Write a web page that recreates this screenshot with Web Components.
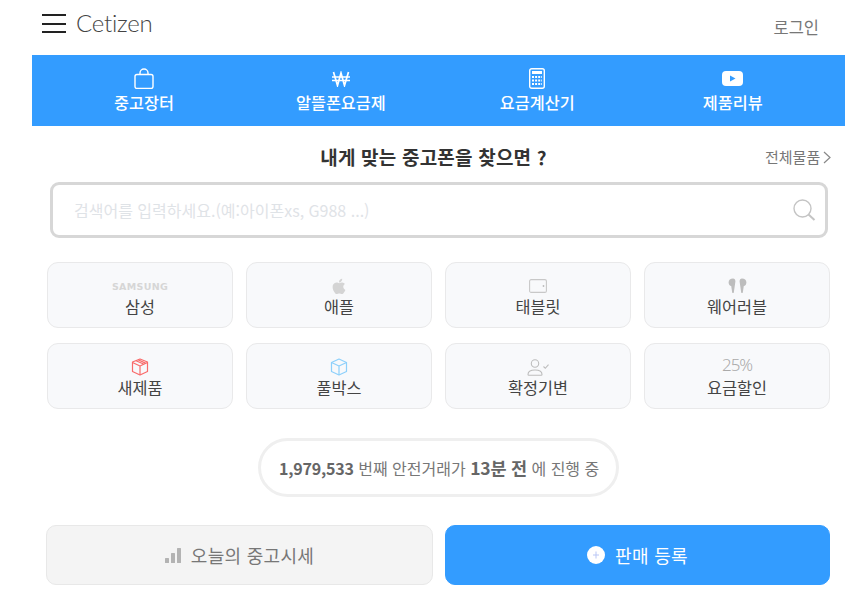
<!DOCTYPE html>
<html lang="ko">
<head>
<meta charset="utf-8">
<title>Cetizen</title>
<style>
  html, body { margin: 0; background: #fff; }
  body { font-family: "Noto Sans CJK KR", "Noto Sans", sans-serif; color: #444; }
  svg { display: block; }
</style>
</head>
<body>

<ce-page>
  <ce-header></ce-header>

  <ce-nav>
    <ce-nav-item label="중고장터">
      <svg width="20" height="21" viewBox="0 0 20 21" fill="none" stroke="#fff" stroke-width="1.4"><rect x="1" y="6.5" width="18" height="14" rx="2"/><path d="M6 6.5V5a4 4 0 0 1 8 0v1.5"/></svg>
    </ce-nav-item>
    <ce-nav-item label="알뜰폰요금제">
      <svg width="18" height="16" viewBox="0 0 18 16" fill="none" stroke="#fff" stroke-width="1.7"><path d="M1.5 1l4 13.5L9 2l3.5 12.5L16.5 1"/><path stroke-width="1.3" d="M0 6h18M0 9.5h18"/></svg>
    </ce-nav-item>
    <ce-nav-item label="요금계산기">
      <svg width="16" height="21" viewBox="0 0 16 21" fill="none"><rect x=".7" y=".7" width="14.6" height="19.6" rx="2" stroke="#fff" stroke-width="1.4"/><rect x="3" y="3" width="10" height="3" fill="#fff"/><path stroke="#fff" stroke-width="1.8" stroke-dasharray="2 1.1" d="M3 9h10M3 12.5h10M3 16h10"/></svg>
    </ce-nav-item>
    <ce-nav-item label="제품리뷰">
      <svg width="21" height="15" viewBox="0 0 21 15"><rect width="21" height="15" rx="4" fill="#fff"/><path d="M8 4.5l5.5 3L8 10.500z" fill="#339cff"/></svg>
    </ce-nav-item>
  </ce-nav>

  <ce-finder></ce-finder>

  <ce-tile-grid>
    <ce-tile label="삼성"><span style="font:700 9.500px 'DejaVu Sans',sans-serif;letter-spacing:.3px;color:#d6d6d6">SAMSUNG</span></ce-tile>
    <ce-tile label="애플">
      <svg width="16" height="16" viewBox="3 2 18 19" fill="#d4d4d4"><path d="M17.050 20.280c-.98.95-2.050.8-3.080.35-1.090-.46-2.090-.48-3.240 0-1.440.62-2.200.44-3.060-.35C2.790 15.250 3.510 7.590 9.050 7.310c1.350.07 2.290.74 3.080.8 1.180-.24 2.310-.93 3.570-.84 1.510.12 2.650.72 3.400 1.800-3.120 1.870-2.380 5.980.48 7.130-.57 1.500-1.310 2.990-2.540 4.090zM12.030 7.250c-.15-2.230 1.660-4.070 3.740-4.250.29 2.580-2.340 4.500-3.740 4.250z"/></svg>
    </ce-tile>
    <ce-tile label="태블릿">
      <svg width="18" height="14" viewBox="0 0 18 14" fill="none"><rect x=".6" y=".6" width="16.800" height="12.800" rx="1.500" stroke="#c8c8c8" stroke-width="1.100"/><circle cx="14.500" cy="7" r=".9" fill="#bbb"/></svg>
    </ce-tile>
    <ce-tile label="웨어러블">
      <svg width="19" height="16" viewBox="0 0 19 16" fill="#bdbdbd"><path d="M5 .5C2.400.5.600 2.200.600 4.400c0 1.900 1.200 3.300 2.600 3.500l1 6.600c.1.800 1.500.8 1.600 0L7.400 3.600C7.500 1.700 6.500.5 5 .5zM3.200 2.600c-.6.500-.9 1.200-.9 1.900 0 .5.100 1 .4 1.300.2-1.200.4-2.200.5-3.200z"/><path d="M14 .5c2.600 0 4.400 1.700 4.400 3.900 0 1.900-1.200 3.300-2.600 3.500l-1 6.600c-.1.800-1.500.8-1.600 0L11.600 3.600C11.500 1.700 12.500.5 14 .5zM15.800 2.600c.6.500.9 1.200.9 1.900 0 .5-.1 1-.4 1.300-.2-1.200-.4-2.200-.5-3.200z"/></svg>
    </ce-tile>
    <ce-tile label="새제품">
      <svg width="18" height="18" viewBox="0 0 18 18" fill="none" stroke="#f96a6a" stroke-width="1.200" stroke-linejoin="round"><path d="M9 1l7.500 3v9.500L9 17l-7.500-3.500V4z"/><path d="M1.500 4.500L9 8l7.500-3.500M9 8v9M5 2.700l7.500 3.300M7 1.800l7.500 3.300"/></svg>
    </ce-tile>
    <ce-tile label="풀박스">
      <svg width="18" height="18" viewBox="0 0 18 18" fill="none" stroke="#8dd0fb" stroke-width="1.200" stroke-linejoin="round"><path d="M9 1l7.500 3.500v9L9 17l-7.500-3.500v-9z"/><path d="M1.500 4.500L9 8l7.500-3.500M9 8v9"/></svg>
    </ce-tile>
    <ce-tile label="확정기변">
      <svg width="22" height="17" viewBox="0 0 22 17" fill="none" stroke="#bdbdbd" stroke-width="1.100"><circle cx="8" cy="4.500" r="3.700"/><path d="M1 15.500c0-3 3-4.500 7-4.500s7 1.500 7 4.500c0 .4-.3.7-.7.7H1.700c-.4 0-.7-.3-.7-.7z"/><path d="M16.500 7.500l1.800 1.800 3.200-3.600"/></svg>
    </ce-tile>
    <ce-tile label="요금할인"><span style="font:300 17px/16px 'Noto Sans',sans-serif;letter-spacing:-1.1px;color:#aaa;margin-bottom:4px">25%</span></ce-tile>
  </ce-tile-grid>

  <ce-deal-pill></ce-deal-pill>

  <ce-actions>
    <ce-action-button label="오늘의 중고시세">
      <svg width="16" height="15" viewBox="0 0 16 15" fill="#b3b3b3"><rect y="10" width="4" height="5" rx=".5"/><rect x="6" y="5" width="4" height="10" rx=".5"/><rect x="12" width="4" height="15" rx=".5"/></svg>
    </ce-action-button>
    <ce-action-button primary label="판매 등록">
      <svg width="18" height="18" viewBox="0 0 18 18"><circle cx="9" cy="9" r="9" fill="#fff"/><path d="M9 5.500v7M6 9h6" stroke="#b9c6f5" stroke-width="1"/></svg>
    </ce-action-button>
  </ce-actions>
</ce-page>

<script>
// Small helper, every element here only needs its markup in an open shadow root.
function shadow (element, html) {
  element.attachShadow({ mode: 'open' }).innerHTML = html
}

customElements.define('ce-page', class extends HTMLElement {
  constructor () {
    super()
    shadow(this, `
      <style>
        :host { display: flex; flex-direction: column; width: 860px; height: 604px; overflow: hidden; }
      </style>
      <slot></slot>`)
  }
})

customElements.define('ce-header', class extends HTMLElement {
  constructor () {
    super()
    shadow(this, `
      <style>
        :host { display: flex; align-items: center; height: 55px; padding: 0 41px 0 42px; box-sizing: border-box; }
        .burger { width: 24px; height: 19px; margin-top: -8px; display: flex; flex-direction: column; justify-content: space-between; }
        .burger i { display: block; height: 2px; background: #222; }
        .logo { margin: -9px 0 0 10px; font: 300 24px/30px Lato, sans-serif; color: #444; letter-spacing: -.25px; }
        .login { margin: -1px 0 0 auto; font-size: 16.500px; color: #777; }
      </style>
      <div class="burger"><i></i><i></i><i></i></div>
      <div class="logo">Cetizen</div>
      <div class="login">로그인</div>`)
  }
})

customElements.define('ce-nav', class extends HTMLElement {
  constructor () {
    super()
    shadow(this, `
      <style>
        :host { display: flex; height: 71px; margin: 0 15px 0 32px; padding-left: 82px; background: #339cff; }
        ::slotted(:nth-child(2)) { margin-left: 122px; }
        ::slotted(:nth-child(3)) { margin-left: 114px; }
        ::slotted(:nth-child(4)) { margin-left: 128px; }
      </style>
      <slot></slot>`)
  }
})

customElements.define('ce-nav-item', class extends HTMLElement {
  constructor () {
    super()
    shadow(this, `
      <style>
        :host { display: flex; flex-direction: column; align-items: center; color: #fff; font-size: 16.300px; font-weight: 500; }
        .icon { height: 21px; margin-top: 13px; display: flex; align-items: center; justify-content: center; }
        .label { line-height: 22px; margin-top: 2px; white-space: nowrap; }
      </style>
      <div class="icon"><slot></slot></div>
      <div class="label">${this.getAttribute('label')}</div>`)
  }
})

customElements.define('ce-finder', class extends HTMLElement {
  constructor () {
    super()
    shadow(this, `
      <style>
        :host { display: block; position: relative; padding: 0 32px 0 50px; }
        .head { display: flex; justify-content: center; align-items: center; height: 56px; margin-left: -50px; margin-right: -32px; position: relative; }
        h2 { margin: 6px 0 0 7px; font-size: 19px; line-height: 24px; font-weight: 700; color: #333; letter-spacing: .2px; }
        .all { position: absolute; left: 765px; top: 21px; display: flex; align-items: center; gap: 3px; font-size: 15px; line-height: 20px; color: #777; }
        .box { display: flex; align-items: center; height: 56px; box-sizing: border-box; padding: 0 9px 0 21px; border: 3px solid #d7d7d7; border-radius: 9px; }
        .hint { flex: 1; font-size: 16px; color: #dfe3e7; }
      </style>
      <div class="head">
        <h2>내게 맞는 중고폰을 찾으면 ?</h2>
        <div class="all">전체물품
          <svg width="8" height="13" viewBox="0 0 8 13" fill="none" stroke="#888" stroke-width="1.200"><path d="M1 1l6 5.500L1 12"/></svg>
        </div>
      </div>
      <div class="box">
        <div class="hint">검색어를 입력하세요.(예:아이폰xs, G988 ...)</div>
        <svg width="23" height="22" viewBox="0 0 23 22" fill="none" stroke="#c4c4c4" stroke-width="1.400"><circle cx="9.500" cy="9.500" r="8.500"/><path stroke-width="2" d="M15.500 15.500l6 5.500"/></svg>
      </div>`)
  }
})

customElements.define('ce-tile-grid', class extends HTMLElement {
  constructor () {
    super()
    shadow(this, `
      <style>
        :host { display: grid; grid-template-columns: repeat(4, 186px); grid-auto-rows: 66px; gap: 15px 13px; margin: 24px 0 0 47px; }
      </style>
      <slot></slot>`)
  }
})

customElements.define('ce-tile', class extends HTMLElement {
  constructor () {
    super()
    shadow(this, `
      <style>
        :host { display: flex; flex-direction: column; align-items: center; box-sizing: border-box; background: #f8f9fb; border: 1.500px solid #e9e9ea; border-radius: 11px; }
        .icon { height: 20px; margin-top: 13px; display: flex; align-items: center; justify-content: center; }
        .label { font-size: 16.300px; line-height: 22px; margin-top: -1px; color: #444; white-space: nowrap; }
      </style>
      <div class="icon"><slot></slot></div>
      <div class="label">${this.getAttribute('label')}</div>`)
  }
})

customElements.define('ce-deal-pill', class extends HTMLElement {
  constructor () {
    super()
    shadow(this, `
      <style>
        :host { display: flex; align-items: center; align-self: flex-start; box-sizing: border-box; height: 59px; margin: 29px 0 0 258px; padding: 0 17px 0 18px; border: 3px solid #efefef; border-radius: 30px; font-size: 16px; color: #777; white-space: pre; }
        b { font-size: 16px; font-weight: 700; color: #666; letter-spacing: -.2px; }
        b.ago { font-size: 17.500px; }
      </style>
      <b>1,979,533</b> 번째 안전거래가 <b class="ago">13분 전</b> 에 진행 중`)
  }
})

customElements.define('ce-actions', class extends HTMLElement {
  constructor () {
    super()
    shadow(this, `
      <style>
        :host { display: grid; grid-template-columns: 387px 385px; column-gap: 12px; margin: 28px 0 0 46px; height: 60px; }
      </style>
      <slot></slot>`)
  }
})

customElements.define('ce-action-button', class extends HTMLElement {
  constructor () {
    super()
    shadow(this, `
      <style>
        :host { display: flex; align-items: center; justify-content: center; gap: 10px; box-sizing: border-box; border: 1.500px solid #e8e8e8; border-radius: 10px; background: #f4f4f4; color: #777; font-size: 18px; letter-spacing: .3px; }
        :host([primary]) { background: #339cff; border-color: #339cff; color: #fff; }
      </style>
      <slot></slot>
      <span>${this.getAttribute('label')}</span>`)
  }
})
</script>
</body>
</html>
